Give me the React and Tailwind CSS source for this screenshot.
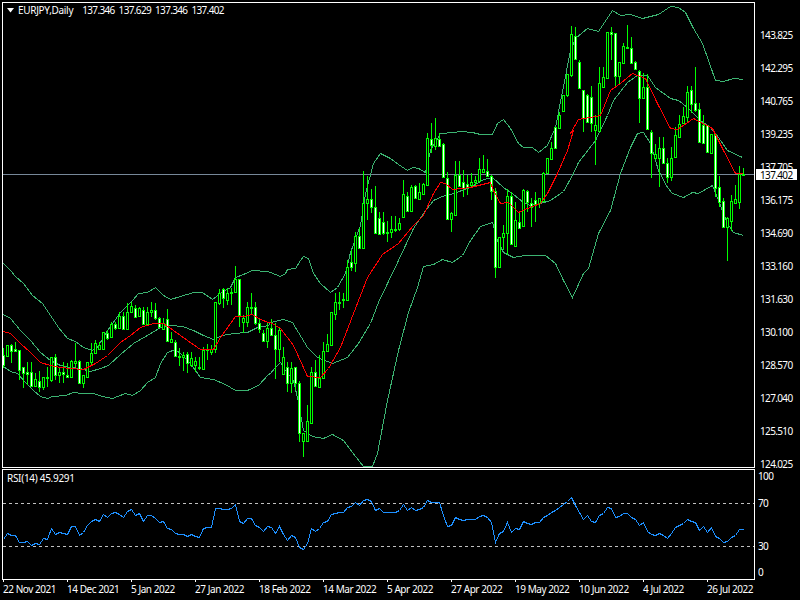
import React from "react";

const map = (ox, oy, pts) => pts.map(([x, y]) => [ox + x / 3, oy + y / 3]);
const line = (...segs) => segs.flat().map(([x, y]) => `${Math.round(x) + 0.5},${Math.round(y) + 0.5}`).join(" ");

const upper = line(
  map(0, 250, [[9,40],[30,60],[45,78],[70,100],[95,135],[125,160],[150,195],[175,232],[200,263],[225,272],[250,292],[275,300],[290,290],[320,240],[360,185],[395,150],[415,130],[440,125],[465,112],[490,135],[510,148],[540,138],[580,125],[605,125],[635,148],[660,130],[690,110],[705,80],[730,72],[755,60],[800,62]]),
  map(270, 100, [[0,515],[30,528],[45,520],[50,508],[75,505],[90,480],[100,468],[115,475],[130,520],[150,550],[180,575],[200,560],[225,520],[240,455],[270,375],[285,280],[310,190],[330,160],[360,175],[385,192],[410,210],[425,202],[445,205],[465,215],[480,150],[510,98],[550,95],[570,92],[605,95],[630,103],[665,102],[680,68],[700,58],[720,85],[745,130],[760,142],[785,142]]),
  map(530, 0, [[25,455],[50,435],[75,380],[120,150],[135,115],[170,85],[205,93],[245,30],[270,45],[300,43],[335,55],[385,42],[420,18],[445,20],[465,35],[490,85],[515,130],[555,240],[580,243],[610,235],[640,238]])
);
const middle = line(
  map(0, 250, [[9,193],[30,205],[60,240],[90,270],[120,305],[150,330],[180,345],[210,350],[240,355],[270,362],[300,355],[325,345],[360,312],[400,280],[440,255],[480,232],[510,225],[545,227],[580,240],[610,255],[640,268],[665,255],[700,250],[740,247],[770,232],[805,225]]),
  map(270, 260, [[0,185],[40,178],[65,185],[85,215],[110,260],[140,290],[185,310],[230,290],[265,250],[300,190],[325,125],[350,70],[385,0]]),
  map(270, 100, [[430,385],[460,340],[490,300],[515,287],[550,280],[600,260],[640,238],[665,230],[700,260],[730,282],[760,305]]),
  map(530, 130, [[0,225],[30,220],[60,210],[100,183],[130,130],[145,95],[195,30]]),
  map(530, 0, [[230,345],[250,300],[290,245],[320,225],[350,225],[375,260],[420,295],[445,300],[470,320],[510,360],[540,380],[565,410],[590,450],[635,472]])
);
const lower = line(
  map(0, 250, [[9,348],[30,362],[50,368],[75,395],[100,420],[120,437],[140,445],[155,438],[195,435],[220,427],[245,430],[280,428],[305,438],[335,445],[375,430],[395,436],[420,420],[440,395],[465,380],[480,340],[500,305],[525,298],[545,315],[570,340],[600,380],[640,388],[675,403],[705,420],[740,420],[775,405],[805,372]]),
  map(270, 260, [[0,340],[15,320],[30,305],[45,330],[70,360],[85,425],[100,510],[125,528],[160,533],[185,522],[220,540],[245,575],[280,618],[305,618],[320,580],[350,420],[385,270],[415,155],[440,80],[460,17],[490,12]]),
  map(270, 100, [[515,478],[545,485],[575,465],[600,420],[630,378],[665,365],[680,420],[700,455],[730,470],[765,465],[780,465]]),
  map(530, 130, [[45,376],[75,400],[100,450],[125,500],[160,430],[175,415],[205,310],[240,240],[270,130],[300,50],[320,10],[340,5],[360,40],[385,120],[410,170],[425,188],[460,202],[485,185],[505,188],[545,165],[565,210],[590,280],[610,305],[640,316]])
);
const red = line(
  map(0, 250, [[9,243],[30,250],[60,280],[90,305],[120,335],[150,345],[180,350],[210,353],[250,358],[285,340],[320,315],[360,275],[390,255],[420,232],[460,218],[490,218],[520,240],[560,270],[600,298],[640,298],[660,260],[705,197],[730,197],[755,193],[780,207],[805,217]]),
  map(270, 260, [[0,185],[30,205],[70,255],[110,347],[150,352],[175,325],[210,260],[250,160],[290,50]]),
  map(270, 100, [[335,462],[385,428],[430,375],[460,345],[490,280],[510,247],[525,250],[545,268],[600,262],[660,245],[670,270],[690,310],[715,307],[745,335],[770,325]]),
  map(530, 130, [[30,220],[50,190],[80,130],[110,60],[130,0]]),
  map(530, 0, [[120,400],[145,358],[180,350],[210,345],[240,270],[270,250],[305,220],[345,235],[380,310],[420,385],[440,388],[490,355],[545,385],[575,445],[615,518],[635,518]])
);

const rsiRaw = [
  236,220,226,226,246,246,243,256,248,253,235,238,203,222,217,218,223,198,198,226,215,195,184,176,184,163,172,160,157,162,172,153,148,166,158,182,166,166,175,187,182,204,207,219,223,221,229,222,228,232,203,202,200,145,143,148,146,143,133,183,190,175,175,195,200,213,199,
  201,220,199,222,241,226,232,262,266,250,205,212,205,186,183,163,158,157,156,140,139,127,134,119,118,122,151,143,156,157,155,155,150,131,151,140,151,147,142,119,127,125,127,165,199,194,170,177,181,178,176,176,168,166,170,185,245,219,213,187,217,204,206,184,188,193,187,187,
  172,164,156,150,142,132,122,112,135,155,178,166,182,187,164,160,142,143,170,167,160,160,171,176,196,187,212,222,226,220,224,235,220,202,195,190,176,183,187,211,199,215,202,227,233,246,243,232,226,208,208,
];
const rsi = rsiRaw.map((z, i) => `${3 + 4 * i + 0.5},${Math.round(460 + z / 3) + 0.5}`).join(" ");

// [bodyTop, bodyBottom, high, low, bearish(white)] in zoomed units
const g1 = [[315,345,295,355,1],[285,318,285,320,0],[285,302,282,340,1],[298,302,275,305,1],[300,360,300,390,1],[352,370,350,415,1],[365,371,335,405,1],[365,407,335,412,1],[388,407,370,410,0],[392,412,362,425,1],[382,412,380,420,0],[380,385,352,410,0],[322,390,320,395,0],[322,375,312,390,1],[365,375,355,398,0],[365,373,335,400,1],[375,380,340,385,1],[332,382,330,384,0],[332,340,278,350,0],[332,398,330,400,1],[375,398,375,415,0],[335,380,335,382,0],[308,335,280,345,0],[280,308,270,310,0],[285,298,275,300,0],[247,298,245,300,0],[250,265,240,270,1],[222,262,215,265,0],[222,235,215,240,1],[197,235,185,238,0],[197,238,185,240,1],[185,238,158,240,0],[167,185,155,190,0],[173,200,165,205,1],[173,197,170,200,0],[180,223,170,225,1],[185,223,170,225,0],[180,187,157,200,0],[180,205,158,210,1],[205,232,200,235,1],[220,238,205,240,0],[208,272,178,275,1],[268,275,245,280,0],[275,317,270,320,1],[317,322,295,347,0],[315,322,305,362,0],[313,340,305,370,1],[325,345,305,350,0],[332,345,320,365,0],[352,355,320,360,0],[300,358,290,360,0],[298,298,282,330,1],[298,305,285,315,0],[155,298,155,310,0],[130,160,118,165,0],[118,145,115,175,1],[130,150,115,165,0],[125,130,115,165,0],[88,125,48,130,0],[88,195,88,230,1],[205,215,195,250,0],[170,215,155,230,0],[170,170,130,195,1],[170,218,155,225,1],[218,238,205,250,1],[250,272,240,275,1],[235,272,220,295,0]];
const g2 = [[205,225,178,228,1],[225,268,190,358,1],[210,268,205,305,0],[290,343,260,345,0],[320,368,305,395,1],[325,370,305,400,0],[322,368,320,390,1],[370,520,362,545,1],[518,542,518,590,0],[482,542,435,545,0],[335,488,320,490,0],[335,378,300,380,1],[355,382,285,385,0],[272,355,245,357,0],[253,272,222,275,0],[157,255,155,258,0],[125,163,100,180,0],[125,125,97,150,0],[118,118,100,145,0]];
const g3 = [[500,600,480,602,0],[487,500,450,512,1],[408,488,395,515,0],[408,443,385,445,1],[308,443,212,445,0],[298,308,228,360,0],[298,320,268,338,1],[320,400,258,402,1],[355,402,335,405,1],[367,400,335,405,1],[395,400,362,425,0],[388,395,348,415,0],[388,388,348,395,1],[370,388,355,392,0],[283,350,240,352,0],[287,332,275,335,1],[260,332,255,335,0],[258,295,255,298,1],[277,297,250,300,0],[252,282,250,285,0],[115,255,100,257,0],[118,135,68,160,1],[115,137,55,150,0],[118,137,100,140,1],[133,232,130,235,1],[235,358,215,360,1],[340,358,335,395,0],[225,345,182,348,0],[225,258,183,260,1],[245,265,210,290,1],[253,262,225,285,1],[245,255,218,265,0],[240,245,228,262,0],[208,242,175,245,0],[208,215,165,217,0],[213,228,178,230,1],[228,272,225,300,1],[272,500,265,533,1],[410,502,410,505,0],[400,412,375,450,0],[287,400,268,465,0],[287,433,275,435,1],[360,437,305,440,0],[365,385,335,388,1],[270,378,268,380,0],[273,307,270,335,1]];
const g4 = [[218,232,205,290,1],[210,222,185,275,1],[205,218,205,235,0],[128,212,125,215,0],[85,128,85,130,0]];
const g5 = [[443,478,425,480,0],[382,445,380,447,1],[345,385,335,388,0],[285,333,285,335,0],[222,285,222,290,0],[103,225,78,230,0],[108,178,82,180,1],[185,265,180,268,1],[270,355,270,395,1],[285,365,283,367,1],[290,368,258,395,1],[375,390,345,495,0],[250,393,200,395,0],[230,262,200,265,0],[97,235,97,238,0],[97,102,80,180,1],[100,228,98,258,1],[185,228,185,255,0],[138,190,128,192,0],[140,145,75,145,0],[145,188,110,190,1],[187,208,183,210,1],[212,295,210,370,1],[262,295,220,297,0],[262,388,222,390,1],[395,460,390,533,1],[462,475,433,480,0],[445,475,410,562,0],[445,490,410,492,1],[490,530,475,550,1],[475,532,440,542,0],[405,472,380,475,0],[372,410,345,412,0],[348,368,320,372,0],[275,350,258,370,0],[270,312,258,340,1],[310,330,200,335,1],[328,425,310,427,1],[375,430,345,432,1],[375,455,375,458,1],[403,458,403,460,0],[403,563,400,590,1]];
const g6 = [[172,215,138,230,1],[212,290,205,290,1],[265,290,262,392,0],[213,272,195,302,0],[208,218,165,220,0],[133,215,108,238,0],[133,136,115,138,1]];

const toReal = (g, oy) => g.map(([t, b, h, l, w]) => ({
  t: Math.round(oy + t / 3), b: Math.round(oy + b / 3), h: Math.round(oy + h / 3), l: Math.round(oy + l / 3), w,
}));
const candles = [...toReal(g1, 250), ...toReal(g2, 260), ...toReal(g3, 100), ...toReal(g4, 130), ...toReal(g5, 0), ...toReal(g6, 130)];

const prices = ["143.825","142.295","140.765","139.235","137.705","136.175","134.690","133.160","131.630","130.100","128.570","127.040","125.510","124.025"];
const dates = ["22 Nov 2021","14 Dec 2021","5 Jan 2022","27 Jan 2022","18 Feb 2022","14 Mar 2022","5 Apr 2022","27 Apr 2022","19 May 2022","10 Jun 2022","4 Jul 2022","26 Jul 2022"];

export default function App() {
  return (
    <div className="relative flex h-[600px] w-[800px] flex-col overflow-hidden bg-black pl-[2px] pt-[2px] font-['Noto_Sans'] text-[10px] leading-none tracking-[-0.65px] text-white">
      <div className="flex h-[466px] shrink-0">
        <div className="relative h-[466px] w-[753px] shrink-0 border border-white">
          <svg width="751" height="464" viewBox="3 3 751 464" className="block" shapeRendering="crispEdges">
            <line x1="3" x2="754" y1="174.5" y2="174.5" stroke="#778899" />
            <polyline points={upper} fill="none" stroke="#3CB371" />
            <polyline points={middle} fill="none" stroke="#3CB371" />
            <polyline points={lower} fill="none" stroke="#3CB371" />
            {candles.map((c, i) => {
              const x = 3 + 4 * i;
              const h = Math.max(c.b - c.t, 1);
              return (
                <g key={i}>
                  <rect x={x} y={c.h} width="1" height={Math.max(c.l - c.h, 1)} fill="#00ff00" />
                  <rect x={x - 1} y={c.t} width="3" height={h + 1} fill="#00ff00" />
                  {h > 1 && <rect x={x} y={c.t + 1} width="1" height={h - 1} fill={c.w ? "#ffffff" : "#000000"} />}
                </g>
              );
            })}
            <polyline points={red} fill="none" stroke="#ff0000" />
          </svg>
          <div className="absolute left-[4px] top-[2px] flex items-center whitespace-pre">
            <svg width="7" height="5" viewBox="0 0 7 5" className="mr-[4px]"><path d="M0 0H7L3.5 4.5Z" fill="#fff" /></svg>
            <span className="tracking-[-0.3px]">EURJPY,Daily</span>
            <span className="ml-[9px] [word-spacing:2px]">137.346 137.629 137.346 137.402</span>
          </div>
        </div>
        <div className="relative flex flex-1 flex-col pl-[5px] pt-[16px]">
          {prices.map((p) => (
            <div key={p} className="flex h-[33px] shrink-0 items-center">{p}</div>
          ))}
          <div className="absolute left-[1px] top-[167px] flex h-[11px] w-[41px] items-center bg-white pl-[4px] text-black">137.402</div>
        </div>
      </div>
      <div className="mt-[1px] flex h-[111px] shrink-0">
        <div className="relative h-[111px] w-[753px] shrink-0 border border-white">
          <svg width="751" height="109" viewBox="3 470 751 109" className="block" shapeRendering="crispEdges">
            <line x1="3" x2="754" y1="503.5" y2="503.5" stroke="#c0c0c0" strokeDasharray="3 3" />
            <line x1="3" x2="754" y1="546.5" y2="546.5" stroke="#c0c0c0" strokeDasharray="3 3" />
            <polyline points={rsi} fill="none" stroke="#1e90ff" />
          </svg>
          <span className="absolute left-[4px] top-[3px] whitespace-pre tracking-[-0.3px]">RSI(14) 45.9291</span>
        </div>
        <div className="flex flex-1 flex-col pl-[3px]">
          <div className="flex h-[13px] shrink-0 items-center">100</div>
          <div className="mt-[14px] flex h-[13px] shrink-0 items-center">70</div>
          <div className="mt-[30px] flex h-[13px] shrink-0 items-center">30</div>
          <div className="mt-[13px] flex h-[13px] shrink-0 items-center">0</div>
        </div>
      </div>
      <div className="flex pl-[1px]">
        {dates.map((d) => (
          <div key={d} className="w-16 shrink-0 whitespace-nowrap tracking-[-0.45px]">
            <div className="h-[2px] w-px bg-white" />
            <div className="mt-[2px]">{d}</div>
          </div>
        ))}
      </div>
    </div>
  );
}
